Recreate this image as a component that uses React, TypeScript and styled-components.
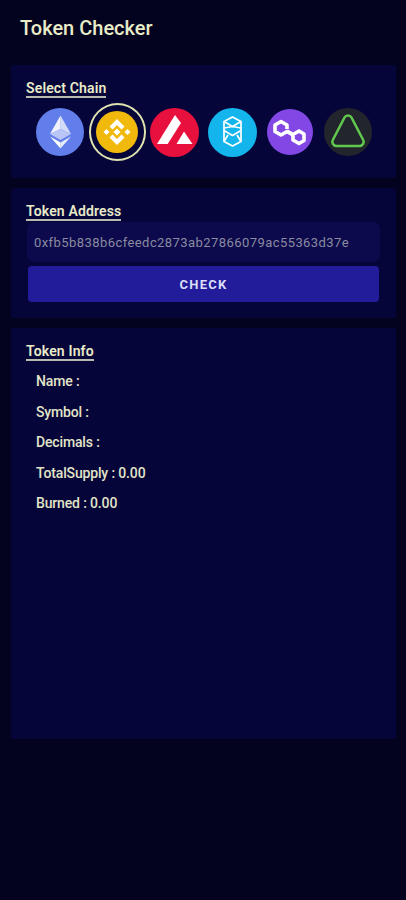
import styled, { createGlobalStyle } from "styled-components";

const GlobalStyle = createGlobalStyle`
  html, body {
    margin: 0;
    padding: 0;
    background: #04031f;
  }
  * {
    box-sizing: border-box;
  }
`;

const Page = styled.div`
  width: 406px;
  height: 900px;
  overflow: hidden;
  background: #04031f;
  color: #e8ebc8;
  font-family: Roboto, "Liberation Sans", sans-serif;
  padding: 0 10px 0 11px;
`;

const Header = styled.header`
  height: 56px;
  padding-left: 9px;
  display: flex;
  align-items: center;
  font-size: 20px;
  font-weight: 500;
  margin-bottom: 9px;
`;

const Card = styled.section<{ $height: number }>`
  height: ${(p) => p.$height}px;
  background: #05053a;
  border-radius: 3px;
  padding: 15px 16px 0 15px;
  margin-bottom: 10px;
`;

const Label = styled.div`
  width: fit-content;
  font-size: 14px;
  font-weight: 600;
  letter-spacing: 0.15px;
  line-height: 16px;
  border-bottom: 2px solid #b9bbb0;
`;

const ChainRow = styled.div`
  display: flex;
  margin: 5px 0 0 5px;
`;

const ChainSlot = styled.div<{ $selected?: boolean }>`
  width: 57.6px;
  height: 58px;
  flex: none;
  border-radius: 50%;
  display: flex;
  align-items: center;
  justify-content: center;
  border: ${(p) => (p.$selected ? "2px solid #dfe2ae" : "none")};
`;

const ChainIcon = styled.svg`
  display: block;
`;

const AddressInput = styled.input`
  display: block;
  width: 353px;
  height: 40px;
  margin: 1px 0 4px 1px;
  background: #0c0a4c;
  border: none;
  outline: none;
  border-radius: 7px;
  padding: 0 7px;
  color: #8a8aa0;
  font-family: Roboto, "Liberation Sans", sans-serif;
  font-size: 13px;
  letter-spacing: 0.43px;
`;

const CheckButton = styled.button`
  display: block;
  width: 351px;
  height: 36px;
  margin-left: 2px;
  background: #231c9a;
  border: none;
  border-radius: 4px;
  color: #dcdff8;
  font-family: Roboto, "Liberation Sans", sans-serif;
  font-size: 13px;
  font-weight: 700;
  letter-spacing: 1.2px;
`;

const InfoList = styled.div`
  display: flex;
  flex-direction: column;
  gap: 12.5px;
  padding: 11px 0 0 10px;
`;

const InfoRow = styled.div`
  font-size: 14px;
  font-weight: 500;
  letter-spacing: -0.15px;
  line-height: 18px;
  color: #e2e4c8;
`;

const chains = [
  {
    name: "Ethereum",
    size: 48,
    fill: "#627eea",
    art: (
      <>
        <path d="M24.500 7.500V21l-10.500 5z" fill="#fff" fillOpacity=".9" />
        <path d="M24.500 7.500V21l10.500 5z" fill="#fff" fillOpacity=".72" />
        <path d="M14 26l10.500-5 10.500 5-10.500 6z" fill="#b9c5f6" />
        <path d="M14 28.500l10.500 6v6z" fill="#fff" />
        <path d="M35 28.500l-10.500 6v6z" fill="#fff" fillOpacity=".85" />
      </>
    ),
  },
  {
    name: "BNB",
    size: 42,
    fill: "#f0b90b",
    art: (
      <g fill="#fff">
        <path d="M21 8l7.500 7.500-3 3-4.500-4.500-4.500 4.500-3-3z" />
        <path d="M21 34l7.500-7.500-3-3-4.500 4.500-4.500-4.500-3 3z" />
        <path d="M21 17.500l3.500 3.500-3.500 3.500-3.500-3.500z" />
        <path d="M10.500 18l3 3-3 3-3-3z" />
        <path d="M31.500 18l3 3-3 3-3-3z" />
      </g>
    ),
  },
  {
    name: "Avalanche",
    size: 49,
    fill: "#e8103d",
    art: (
      <g fill="#fff">
        <path d="M25 7l6 8-13.300 21H7z" />
        <path d="M34 23.500l8.500 12.500H26.500z" />
      </g>
    ),
  },
  {
    name: "Fantom",
    size: 49,
    fill: "#13b5ec",
    art: (
      <g fill="none" stroke="#fff" strokeWidth="1.700" strokeLinejoin="round">
        <path d="M24.500 9l8.500 4.500v20L24.500 38 16 33.500v-20z" />
        <path d="M16 13.500l8.500 5 8.500-5" />
        <path d="M16 20l8.500-1.500 8.500 1.500" />
        <path d="M16 22.500l8.500 5 8.500-5" />
        <path d="M16 33.500l4-6.500M33 33.500l-4-6.500" />
      </g>
    ),
  },
  {
    name: "Polygon",
    size: 46,
    fill: "#8247e5",
    art: (
      <g fill="none" stroke="#fff" strokeWidth="3.600" strokeLinejoin="round">
        <path d="M20 20v-4l-6-3.500L8 16v6.500l6 3.500 6-3.500 6 3.500" />
        <path d="M26 27v4l6 3.500 5-3v-6.500l-5-3-6 3.500-6-3.500" />
      </g>
    ),
  },
  {
    name: "Arbitrum",
    size: 48,
    fill: "#22262c",
    art: (
      <path
        d="M20.500 9.500c1.500-2.800 5.500-2.800 7 0L39.200 32c1.300 2.600-.2 6-3.700 6h-23c-3.500 0-5-3.400-3.700-6z"
        fill="none"
        stroke="#62c94f"
        strokeWidth="2.500"
      />
    ),
  },
];

const info = ["Name :", "Symbol :", "Decimals :", "TotalSupply : 0.00", "Burned : 0.00"];

export default function App() {
  return (
    <Page>
      <GlobalStyle />
      <Header>Token Checker</Header>
      <Card $height={113}>
        <Label>Select Chain</Label>
        <ChainRow>
          {chains.map((chain) => (
            <ChainSlot key={chain.name} $selected={chain.name === "BNB"}>
              <ChainIcon width={chain.size} height={chain.size} viewBox={`0 0 ${chain.size} ${chain.size}`}>
                <circle cx={chain.size / 2} cy={chain.size / 2} r={chain.size / 2} fill={chain.fill} />
                {chain.art}
              </ChainIcon>
            </ChainSlot>
          ))}
        </ChainRow>
      </Card>
      <Card $height={130}>
        <Label>Token Address</Label>
        <AddressInput readOnly value="0xfb5b838b6cfeedc2873ab27866079ac55363d37e" />
        <CheckButton>CHECK</CheckButton>
      </Card>
      <Card $height={411}>
        <Label>Token Info</Label>
        <InfoList>
          {info.map((row) => (
            <InfoRow key={row}>{row}</InfoRow>
          ))}
        </InfoList>
      </Card>
    </Page>
  );
}
